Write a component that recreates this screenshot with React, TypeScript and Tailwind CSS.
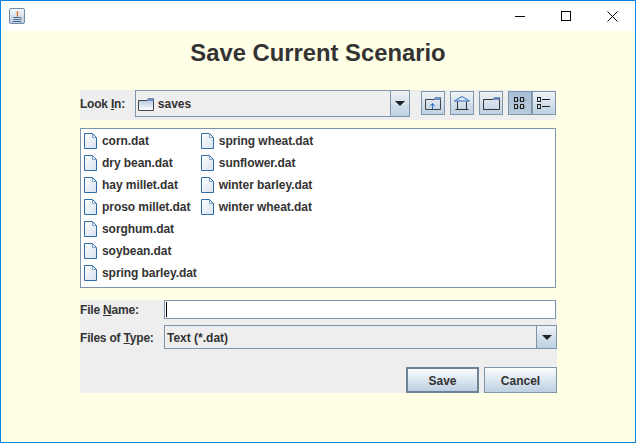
import React from "react";

const Doc = () => (
  <svg width="13" height="16" viewBox="0 0 13 16" className="shrink-0">
    <defs>
      <linearGradient id="docg" x1="0" y1="0" x2="1" y2="1">
        <stop offset="0" stopColor="#ffffff" />
        <stop offset="1" stopColor="#d6e2ef" />
      </linearGradient>
    </defs>
    <path d="M.5 .5H8.5L12.5 4.5V15.5H.5Z" fill="url(#docg)" stroke="#2f6ba5" />
    <path d="M8.5 1V4.5H12" fill="none" stroke="#7fa3c7" />
  </svg>
);

const Arrow = () => (
  <svg width="10" height="5" viewBox="0 0 10 5"><path d="M0 0H10L5 5Z" fill="#222" /></svg>
);

const IconBtn = ({ children, active }: { children: React.ReactNode; active?: boolean }) => (
  <div className={active
    ? "w-6 h-6 flex items-center justify-center border border-[#7f95ab] bg-gradient-to-b from-[#a9bfd6] to-[#b9cbdd]"
    : "w-6 h-6 flex items-center justify-center border border-[#7f95ab] bg-gradient-to-b from-[#f0f4f8] to-[#bdd0e2]"}>
    {children}
  </div>
);

const col1 = ["corn.dat", "dry bean.dat", "hay millet.dat", "proso millet.dat", "sorghum.dat", "soybean.dat", "spring barley.dat"];
const col2 = ["spring wheat.dat", "sunflower.dat", "winter barley.dat", "winter wheat.dat"];

const Item = ({ name }: { name: string }) => (
  <div className="h-[22px] flex items-center gap-[5px] text-[12px] tracking-[-0.06px] font-bold text-[#333]">
    <Doc />
    <span>{name}</span>
  </div>
);

const U = ({ children }: { children: React.ReactNode }) => <span className="underline">{children}</span>;

export default function App() {
  return (
    <div className="w-[636px] h-[443px] flex flex-col border border-[#0a84e4] bg-[#ffffe6] overflow-hidden font-['Liberation_Sans',sans-serif]">
      <div className="h-[30px] shrink-0 bg-white flex items-center justify-between pl-[8px]">
        <div className="w-[16px] h-[16px] border border-[#6f8aa8] rounded-[2px] bg-gradient-to-b from-[#f4f7fa] to-[#bccbdc] flex items-center justify-center">
          <svg width="12" height="13" viewBox="0 0 12 13" fill="none">
            <path d="M7 1C5 3 8 4 6 6.5" stroke="#e2701d" strokeWidth="1.3" />
            <path d="M2 7.5H8.5M2.5 9.5H8M1.5 11.5H10" stroke="#4a6f99" />
            <path d="M8.5 7.5C11 7 10.5 9.5 8 9.8" stroke="#4a6f99" />
          </svg>
        </div>
        <div className="flex items-center">
          <div className="w-[46px] h-[29px] flex items-center justify-center">
            <div className="w-[10px] h-px bg-black" />
          </div>
          <div className="w-[46px] h-[29px] flex items-center justify-center">
            <div className="w-[10px] h-[10px] border border-black" />
          </div>
          <div className="w-[46px] h-[29px] flex items-center justify-center">
            <svg width="11" height="11" viewBox="0 0 11 11"><path d="M.5 .5L10.5 10.5M10.5 .5L.5 10.5" stroke="#000" /></svg>
          </div>
        </div>
      </div>

      <div className="flex-1 flex flex-col">
        <h1 className="mt-[6px] h-[32px] leading-[32px] text-[23.8px] font-bold text-[#333] text-center">Save Current Scenario</h1>

        <div className="mt-[21px] ml-[79px] w-[477px] flex flex-col">
          <div className="h-[30px] w-[476px] flex items-start bg-[#eeeeee]">
            <div className="w-[55px] h-[27px] flex items-center text-[12px] tracking-[-0.22px] font-bold text-[#333]">
              <span>Look <U>I</U>n:</span>
            </div>
            <div className="w-[276px] h-[27px] flex border border-[#7f95ab] bg-[#eeeeee]">
              <div className="flex-1 flex items-center gap-[4px] pl-[2px] text-[12px] font-bold text-[#333]">
                <svg width="16" height="14" viewBox="0 0 16 14">
                  <defs><linearGradient id="f" x1="0" y1="0" x2="0" y2="1"><stop offset="0" stopColor="#a9c0de" /><stop offset="1" stopColor="#ffffff" /></linearGradient></defs>
                  <path d="M.5 3.5H9L11 1.5H15.5V13.5H.5Z" fill="url(#f)" stroke="#444" />
                  <path d="M10 1H15.5V4H9Z" fill="#6f8fc0" />
                </svg>
                <span>saves</span>
              </div>
              <div className="w-[19px] flex items-center justify-center border-l border-[#7f95ab] bg-gradient-to-b from-[#eef2f6] to-[#bdd0e2]"><Arrow /></div>
            </div>
            <div className="ml-[11px] mt-[1px] flex gap-[5px]">
              <IconBtn>
                <svg width="16" height="14" viewBox="0 0 16 14" fill="none">
                  <path d="M.5 3.5H9L11 1.5H15.5V13.5H.5Z" stroke="#444" />
                  <path d="M10 1H15.5V4H9Z" fill="#6f8fc0" />
                  <path d="M7.5 13V7.5M5 10L7.5 7.5L10 10" stroke="#2a6fc0" />
                </svg>
              </IconBtn>
              <IconBtn>
                <svg width="16" height="16" viewBox="0 0 16 16" fill="none">
                  <path d="M.5 6L8 1.5L15.5 6Z" stroke="#2a6fc0" />
                  <path d="M3.5 6.5V14.5H12.5V6.5M1.5 14.5H14.5" stroke="#333" />
                </svg>
              </IconBtn>
              <IconBtn>
                <svg width="17" height="14" viewBox="0 0 17 14" fill="none">
                  <path d="M.5 3.5H10L12 1.5H16.5V13.5H.5Z" stroke="#333" />
                  <path d="M11 1H16.5V4H10Z" fill="#6f8fc0" />
                </svg>
              </IconBtn>
              <div className="flex">
                <IconBtn active>
                  <svg width="16" height="15" viewBox="0 0 16 15" fill="none" stroke="#222">
                    <rect x="2.5" y="1.5" width="3" height="4" /><rect x="8.5" y="1.5" width="3" height="4" />
                    <rect x="2.5" y="8.5" width="3" height="4" /><rect x="8.5" y="8.5" width="3" height="4" />
                    <path d="M6.5 4H7.5M12.5 4H13.5M6.5 11H7.5M12.5 11H13.5" />
                  </svg>
                </IconBtn>
                <IconBtn>
                  <svg width="16" height="15" viewBox="0 0 16 15" fill="none" stroke="#222">
                    <rect x="1.5" y="1.5" width="3" height="4" /><rect x="1.5" y="8.5" width="3" height="4" />
                    <path d="M6 3.5H14M6 10.5H14" />
                  </svg>
                </IconBtn>
              </div>
            </div>
          </div>

          <div className="mt-[8px] h-[160px] w-[476px] bg-white border border-[#7f95ab] flex gap-[4px] pl-[3px] pt-[1px]">
            <div className="flex flex-col">{col1.map((n) => <Item key={n} name={n} />)}</div>
            <div className="flex flex-col">{col2.map((n) => <Item key={n} name={n} />)}</div>
          </div>

          <div className="mt-[12px] h-[93px] bg-[#eeeeee] flex flex-col text-[12px] font-bold text-[#333]">
            <div className="h-[19px] flex items-center">
              <div className="w-[84px] pt-px tracking-[-0.2px]">File <U>N</U>ame:</div>
              <div className="w-[392px] h-[19px] bg-white border border-[#7f95ab] flex items-center pl-px"><div className="w-px h-[15px] bg-black" /></div>
            </div>
            <div className="mt-[6px] h-[24px] flex items-center">
              <div className="w-[84px] pt-px tracking-[-0.2px]">Files of <U>T</U>ype:</div>
              <div className="w-[393px] h-[24px] flex border border-[#7f95ab]">
                <div className="flex-1 flex items-center pl-[2px] pt-px">Text (*.dat)</div>
                <div className="w-[20px] flex items-center justify-center border-l border-[#7f95ab] bg-gradient-to-b from-[#eef2f6] to-[#bdd0e2]"><Arrow /></div>
              </div>
            </div>
            <div className="mt-[18px] flex justify-end gap-[5px]">
              <div className="w-[73px] h-[26px] flex items-center justify-center pt-px border-2 border-[#6e8296] bg-gradient-to-b from-[#fbfcfd] to-[#bdd0e2]">Save</div>
              <div className="w-[73px] h-[26px] flex items-center justify-center pt-px border border-[#7f95ab] bg-gradient-to-b from-[#fbfcfd] to-[#bdd0e2]">Cancel</div>
            </div>
          </div>
        </div>
      </div>
    </div>
  );
}
